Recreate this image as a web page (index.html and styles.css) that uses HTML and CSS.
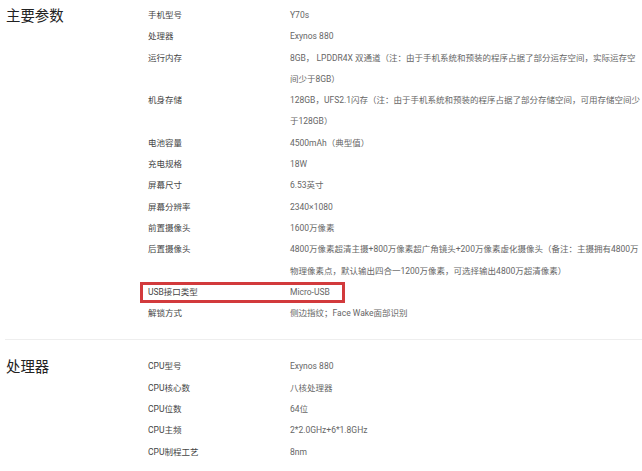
FILE: index.html
```html
<!DOCTYPE html>
<html lang="zh-CN">
<head>
    <meta charset="UTF-8">
    <title>规格参数</title>
    <link rel="stylesheet" href="styles.css">
</head>
<body>
    <div class="spec">
        <!-- 主要参数 -->
        <section class="group">
            <h2 class="group-title">主要参数</h2>
            <dl class="params">
                <div class="row"><dt>手机型号</dt><dd>Y70s</dd></div>
                <div class="row"><dt>处理器</dt><dd>Exynos 880</dd></div>
                <div class="row"><dt>运行内存</dt><dd>8GB， LPDDR4X 双通道（注：由于手机系统和预装的程序占据了部分运存空间，实际运存空间少于8GB）</dd></div>
                <div class="row"><dt>机身存储</dt><dd>128GB，UFS2.1闪存（注：由于手机系统和预装的程序占据了部分存储空间，可用存储空间少于128GB）</dd></div>
                <div class="row"><dt>电池容量</dt><dd>4500mAh（典型值）</dd></div>
                <div class="row"><dt>充电规格</dt><dd>18W</dd></div>
                <div class="row"><dt>屏幕尺寸</dt><dd>6.53英寸</dd></div>
                <div class="row"><dt>屏幕分辨率</dt><dd>2340×1080</dd></div>
                <div class="row"><dt>前置摄像头</dt><dd>1600万像素</dd></div>
                <div class="row"><dt>后置摄像头</dt><dd>4800万像素超清主摄+800万像素超广角镜头+200万像素虚化摄像头（备注：主摄拥有4800万物理像素点，默认输出四合一1200万像素，可选择输出4800万超清像素）</dd></div>
                <div class="row highlighted"><dt>USB接口类型</dt><dd>Micro-USB</dd></div>
                <div class="row"><dt>解锁方式</dt><dd>侧边指纹；Face Wake面部识别</dd></div>
            </dl>
        </section>

        <!-- 处理器 -->
        <section class="group">
            <h2 class="group-title">处理器</h2>
            <dl class="params">
                <div class="row"><dt>CPU型号</dt><dd>Exynos 880</dd></div>
                <div class="row"><dt>CPU核心数</dt><dd>八核处理器</dd></div>
                <div class="row"><dt>CPU位数</dt><dd>64位</dd></div>
                <div class="row"><dt>CPU主频</dt><dd>2*2.0GHz+6*1.8GHz</dd></div>
                <div class="row"><dt>CPU制程工艺</dt><dd>8nm</dd></div>
            </dl>
        </section>
    </div>
</body>
</html>
```

FILE: styles.css
```css
body {
    margin: 0;
    background: #fff;
    font-family: Roboto, "Noto Sans CJK SC", sans-serif;
}
.group {
    display: grid;
    grid-template-columns: 142px 1fr;
    padding: 5px 2px 15px 6px;
}
.group + .group {
    border-top: 1px solid #eeeeee;
    margin-left: 5px;
    padding-left: 1px;
    padding-top: 16px;
}
.group-title {
    margin: 0;
    font-size: 14.4px;
    font-weight: 400;
    line-height: 23px;
    color: #222;
}
.params {
    margin: 0;
}
.row {
    position: relative;
    display: grid;
    grid-template-columns: 142px 1fr;
    font-size: 8.5px;
    line-height: 21.3px;
}
.row dt {
    color: #444;
}
.row dd {
    margin: 0;
    color: #666;
}
/* red annotation box */
.highlighted::after {
    content: "";
    position: absolute;
    top: 0;
    left: -8px;
    width: 205px;
    height: 100%;
    box-sizing: border-box;
    border: 3px solid #d23a3c;
}
```
